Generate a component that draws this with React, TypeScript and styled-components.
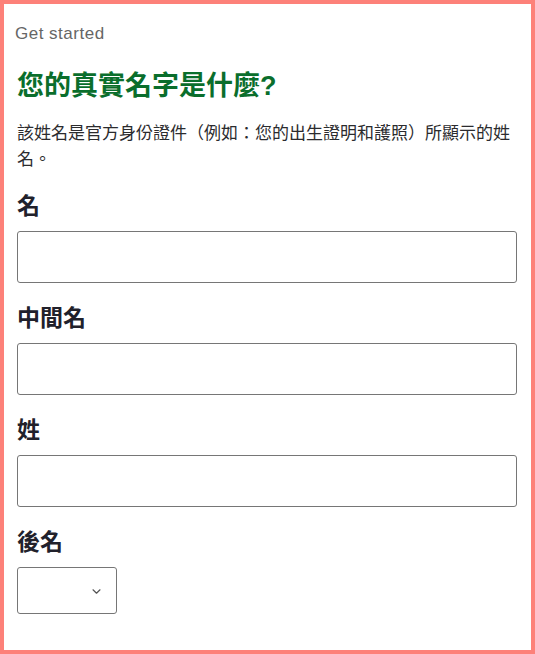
import React from "react";
import styled, { createGlobalStyle } from "styled-components";

const Global = createGlobalStyle`
  html, body { margin: 0; padding: 0; background: #ffffff; }
  * { box-sizing: border-box; }
`;

const FONT = `"Liberation Sans", "Noto Sans CJK TC", sans-serif`;

const Page = styled.div`
  min-height: 100vh;
  border: 4px solid #fd8179;
  background: #fff;
  font-family: ${FONT};
  display: flex;
  flex-direction: column;
`;

const Header = styled.header`
  padding: 19px 10px 0 11px;
  font-size: 17px;
  line-height: 22px;
  letter-spacing: 0.5px;
  color: #666666;
`;

const Main = styled.main`
  padding: 23px 14px 0 13px;
  display: flex;
  flex-direction: column;
`;

const Title = styled.h1`
  margin: 0;
  font-size: 27px;
  line-height: 36px;
  font-weight: 700;
  color: #0a6e2c;
`;

const Hint = styled.p`
  margin: 17px 0 0 0;
  font-size: 17px;
  line-height: 26px;
  color: #2b2b2e;
`;

const Fields = styled.div`
  margin-top: 18px;
  display: flex;
  flex-direction: column;
  gap: 20px;
`;

const Field = styled.div`
  display: flex;
  flex-direction: column;
  gap: 10px;
`;

const Label = styled.label`
  font-size: 23px;
  line-height: 30px;
  font-weight: 700;
  color: #21212b;
`;

const TextInput = styled.input`
  width: 100%;
  height: 52px;
  border: 1px solid #767676;
  border-radius: 3px;
  background: #fff;
  font-family: ${FONT};
  font-size: 17px;
  padding: 0 10px;
  outline: none;
`;

const SelectWrap = styled.div`
  position: relative;
  width: 100px;
  height: 47px;
`;

const Select = styled.select`
  appearance: none;
  -webkit-appearance: none;
  width: 100%;
  height: 100%;
  border: 1px solid #767676;
  border-radius: 3px;
  background: #fff;
  font-family: ${FONT};
  font-size: 17px;
  padding: 0 28px 0 10px;
  outline: none;
`;

const Chevron = styled.svg`
  position: absolute;
  right: 16px;
  top: 50%;
  width: 9px;
  height: 5px;
  margin-top: -2px;
  pointer-events: none;
`;

const fields = [
  { id: "first", label: "名" },
  { id: "middle", label: "中間名" },
  { id: "last", label: "姓" },
];

export default function App() {
  return (
    <>
      <Global />
      <Page>
        <Header>Get started</Header>
        <Main>
          <Title>您的真實名字是什麼?</Title>
          <Hint>
            該姓名是官方身份證件（例如：您的出生證明和護照）所顯示的姓名。
          </Hint>
          <Fields>
            {fields.map((f) => (
              <Field key={f.id}>
                <Label htmlFor={f.id}>{f.label}</Label>
                <TextInput id={f.id} type="text" />
              </Field>
            ))}
            <Field>
              <Label htmlFor="suffix">後名</Label>
              <SelectWrap>
                <Select id="suffix" defaultValue="">
                  <option value=""></option>
                  <option value="jr">Jr.</option>
                  <option value="sr">Sr.</option>
                </Select>
                <Chevron viewBox="0 0 9 5">
                  <path
                    d="M1 0.8 L4.5 4.2 L8 0.8"
                    fill="none"
                    stroke="#555"
                    strokeWidth="1.2"
                    strokeLinecap="round"
                    strokeLinejoin="round"
                  />
                </Chevron>
              </SelectWrap>
            </Field>
          </Fields>
        </Main>
      </Page>
    </>
  );
}
